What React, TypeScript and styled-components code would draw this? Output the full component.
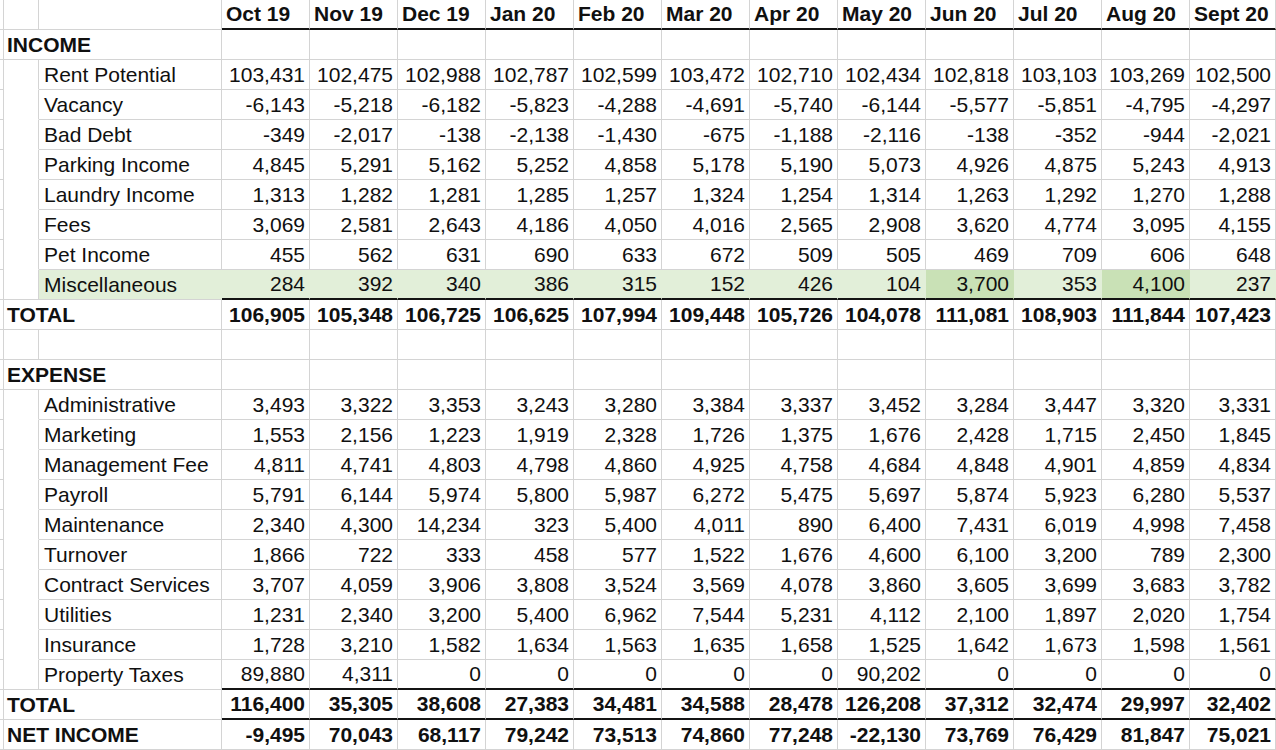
import React from "react";
import styled, { createGlobalStyle } from "styled-components";

const GRID = "#d4d4d4";
const RULE = "2px solid #141414";
const LIGHT_GREEN = "#e2efd9";
const DARK_GREEN = "#c9e1b6";

const Global = createGlobalStyle`
  html, body {
    margin: 0;
    padding: 0;
    background: #ffffff;
    overflow: hidden;
  }
`;

const Sheet = styled.div`
  display: grid;
  grid-template-columns: 4px 35px 183px repeat(11, 88px) 86px;
  grid-auto-rows: 30px;
  width: 1276px;
  font-family: "Liberation Sans", Arial, sans-serif;
  font-size: 21px;
  color: #101010;
`;

const BaseCell = styled.div<{ $rule?: boolean; $fill?: string; $open?: boolean }>`
  box-sizing: border-box;
  white-space: nowrap;
  overflow: visible;
  background: ${(p) => p.$fill ?? "transparent"};
  border-right: 1px solid ${(p) => p.$fill ?? GRID};
  border-bottom: ${(p) =>
    p.$open ? "1px solid transparent" : p.$rule ? RULE : `1px solid ${GRID}`};
  line-height: ${(p) => (p.$rule ? "28px" : "29px")};
`;

const EdgeCell = styled(BaseCell)`
  border-right: 1px solid ${GRID};
`;

const GutterCell = styled(BaseCell)``;

const SectionLabel = styled(BaseCell)`
  grid-column: span 2;
  font-weight: 700;
  padding-left: 3px;
`;

const LabelCell = styled(BaseCell)`
  padding-left: 5px;
`;

const MonthHead = styled(BaseCell)`
  font-weight: 700;
  padding-left: 4px;
`;

const Value = styled(BaseCell)<{ $bold?: boolean }>`
  text-align: right;
  padding-right: 4px;
  font-weight: ${(p) => (p.$bold ? 700 : 400)};
`;

const months = [
  "Oct 19", "Nov 19", "Dec 19", "Jan 20", "Feb 20", "Mar 20",
  "Apr 20", "May 20", "Jun 20", "Jul 20", "Aug 20", "Sept 20",
];

type Item = { label: string; values: string[]; highlight?: number[]; green?: boolean };

const income: Item[] = [
  { label: "Rent Potential", values: ["103,431", "102,475", "102,988", "102,787", "102,599", "103,472", "102,710", "102,434", "102,818", "103,103", "103,269", "102,500"] },
  { label: "Vacancy", values: ["-6,143", "-5,218", "-6,182", "-5,823", "-4,288", "-4,691", "-5,740", "-6,144", "-5,577", "-5,851", "-4,795", "-4,297"] },
  { label: "Bad Debt", values: ["-349", "-2,017", "-138", "-2,138", "-1,430", "-675", "-1,188", "-2,116", "-138", "-352", "-944", "-2,021"] },
  { label: "Parking Income", values: ["4,845", "5,291", "5,162", "5,252", "4,858", "5,178", "5,190", "5,073", "4,926", "4,875", "5,243", "4,913"] },
  { label: "Laundry Income", values: ["1,313", "1,282", "1,281", "1,285", "1,257", "1,324", "1,254", "1,314", "1,263", "1,292", "1,270", "1,288"] },
  { label: "Fees", values: ["3,069", "2,581", "2,643", "4,186", "4,050", "4,016", "2,565", "2,908", "3,620", "4,774", "3,095", "4,155"] },
  { label: "Pet Income", values: ["455", "562", "631", "690", "633", "672", "509", "505", "469", "709", "606", "648"] },
  { label: "Miscellaneous", values: ["284", "392", "340", "386", "315", "152", "426", "104", "3,700", "353", "4,100", "237"], green: true, highlight: [8, 10] },
];

const incomeTotal = ["106,905", "105,348", "106,725", "106,625", "107,994", "109,448", "105,726", "104,078", "111,081", "108,903", "111,844", "107,423"];

const expense: Item[] = [
  { label: "Administrative", values: ["3,493", "3,322", "3,353", "3,243", "3,280", "3,384", "3,337", "3,452", "3,284", "3,447", "3,320", "3,331"] },
  { label: "Marketing", values: ["1,553", "2,156", "1,223", "1,919", "2,328", "1,726", "1,375", "1,676", "2,428", "1,715", "2,450", "1,845"] },
  { label: "Management Fee", values: ["4,811", "4,741", "4,803", "4,798", "4,860", "4,925", "4,758", "4,684", "4,848", "4,901", "4,859", "4,834"] },
  { label: "Payroll", values: ["5,791", "6,144", "5,974", "5,800", "5,987", "6,272", "5,475", "5,697", "5,874", "5,923", "6,280", "5,537"] },
  { label: "Maintenance", values: ["2,340", "4,300", "14,234", "323", "5,400", "4,011", "890", "6,400", "7,431", "6,019", "4,998", "7,458"] },
  { label: "Turnover", values: ["1,866", "722", "333", "458", "577", "1,522", "1,676", "4,600", "6,100", "3,200", "789", "2,300"] },
  { label: "Contract Services", values: ["3,707", "4,059", "3,906", "3,808", "3,524", "3,569", "4,078", "3,860", "3,605", "3,699", "3,683", "3,782"] },
  { label: "Utilities", values: ["1,231", "2,340", "3,200", "5,400", "6,962", "7,544", "5,231", "4,112", "2,100", "1,897", "2,020", "1,754"] },
  { label: "Insurance", values: ["1,728", "3,210", "1,582", "1,634", "1,563", "1,635", "1,658", "1,525", "1,642", "1,673", "1,598", "1,561"] },
  { label: "Property Taxes", values: ["89,880", "4,311", "0", "0", "0", "0", "0", "90,202", "0", "0", "0", "0"] },
];

const expenseTotal = ["116,400", "35,305", "38,608", "27,383", "34,481", "34,588", "28,478", "126,208", "37,312", "32,474", "29,997", "32,402"];
const netIncome = ["-9,495", "70,043", "68,117", "79,242", "73,513", "74,860", "77,248", "-22,130", "73,769", "76,429", "81,847", "75,021"];

const ItemRows: React.FC<{ items: Item[] }> = ({ items }) => (
  <>
    {items.map((it, r) => {
      const last = r === items.length - 1;
      return (
        <React.Fragment key={it.label}>
          <EdgeCell />
          <GutterCell $open={!last} />
          <LabelCell $fill={it.green ? LIGHT_GREEN : undefined}>{it.label}</LabelCell>
          {it.values.map((v, i) => (
            <Value
              key={i}
              $rule={last}
              $fill={
                it.green
                  ? it.highlight?.includes(i)
                    ? DARK_GREEN
                    : LIGHT_GREEN
                  : undefined
              }
            >
              {v}
            </Value>
          ))}
        </React.Fragment>
      );
    })}
  </>
);

const TotalRow: React.FC<{ label: string; values: string[]; rule?: boolean }> = ({ label, values, rule }) => (
  <>
    <EdgeCell />
    <SectionLabel>{label}</SectionLabel>
    {values.map((v, i) => (
      <Value key={i} $bold $rule={rule}>
        {v}
      </Value>
    ))}
  </>
);

const SectionRow: React.FC<{ label: string }> = ({ label }) => (
  <>
    <EdgeCell />
    <SectionLabel>{label}</SectionLabel>
    {months.map((m) => (
      <Value key={m} />
    ))}
  </>
);

const BlankRow: React.FC = () => (
  <>
    <EdgeCell />
    <GutterCell />
    <LabelCell />
    {months.map((m) => (
      <Value key={m} />
    ))}
  </>
);

export default function App() {
  return (
    <>
      <Global />
      <Sheet>
        <EdgeCell />
        <GutterCell />
        <LabelCell />
        {months.map((m) => (
          <MonthHead key={m} $rule>
            {m}
          </MonthHead>
        ))}

        <SectionRow label="INCOME" />
        <ItemRows items={income} />
        <TotalRow label="TOTAL" values={incomeTotal} />
        <BlankRow />
        <SectionRow label="EXPENSE" />
        <ItemRows items={expense} />
        <TotalRow label="TOTAL" values={expenseTotal} rule />
        <TotalRow label="NET INCOME" values={netIncome} />
      </Sheet>
    </>
  );
}
